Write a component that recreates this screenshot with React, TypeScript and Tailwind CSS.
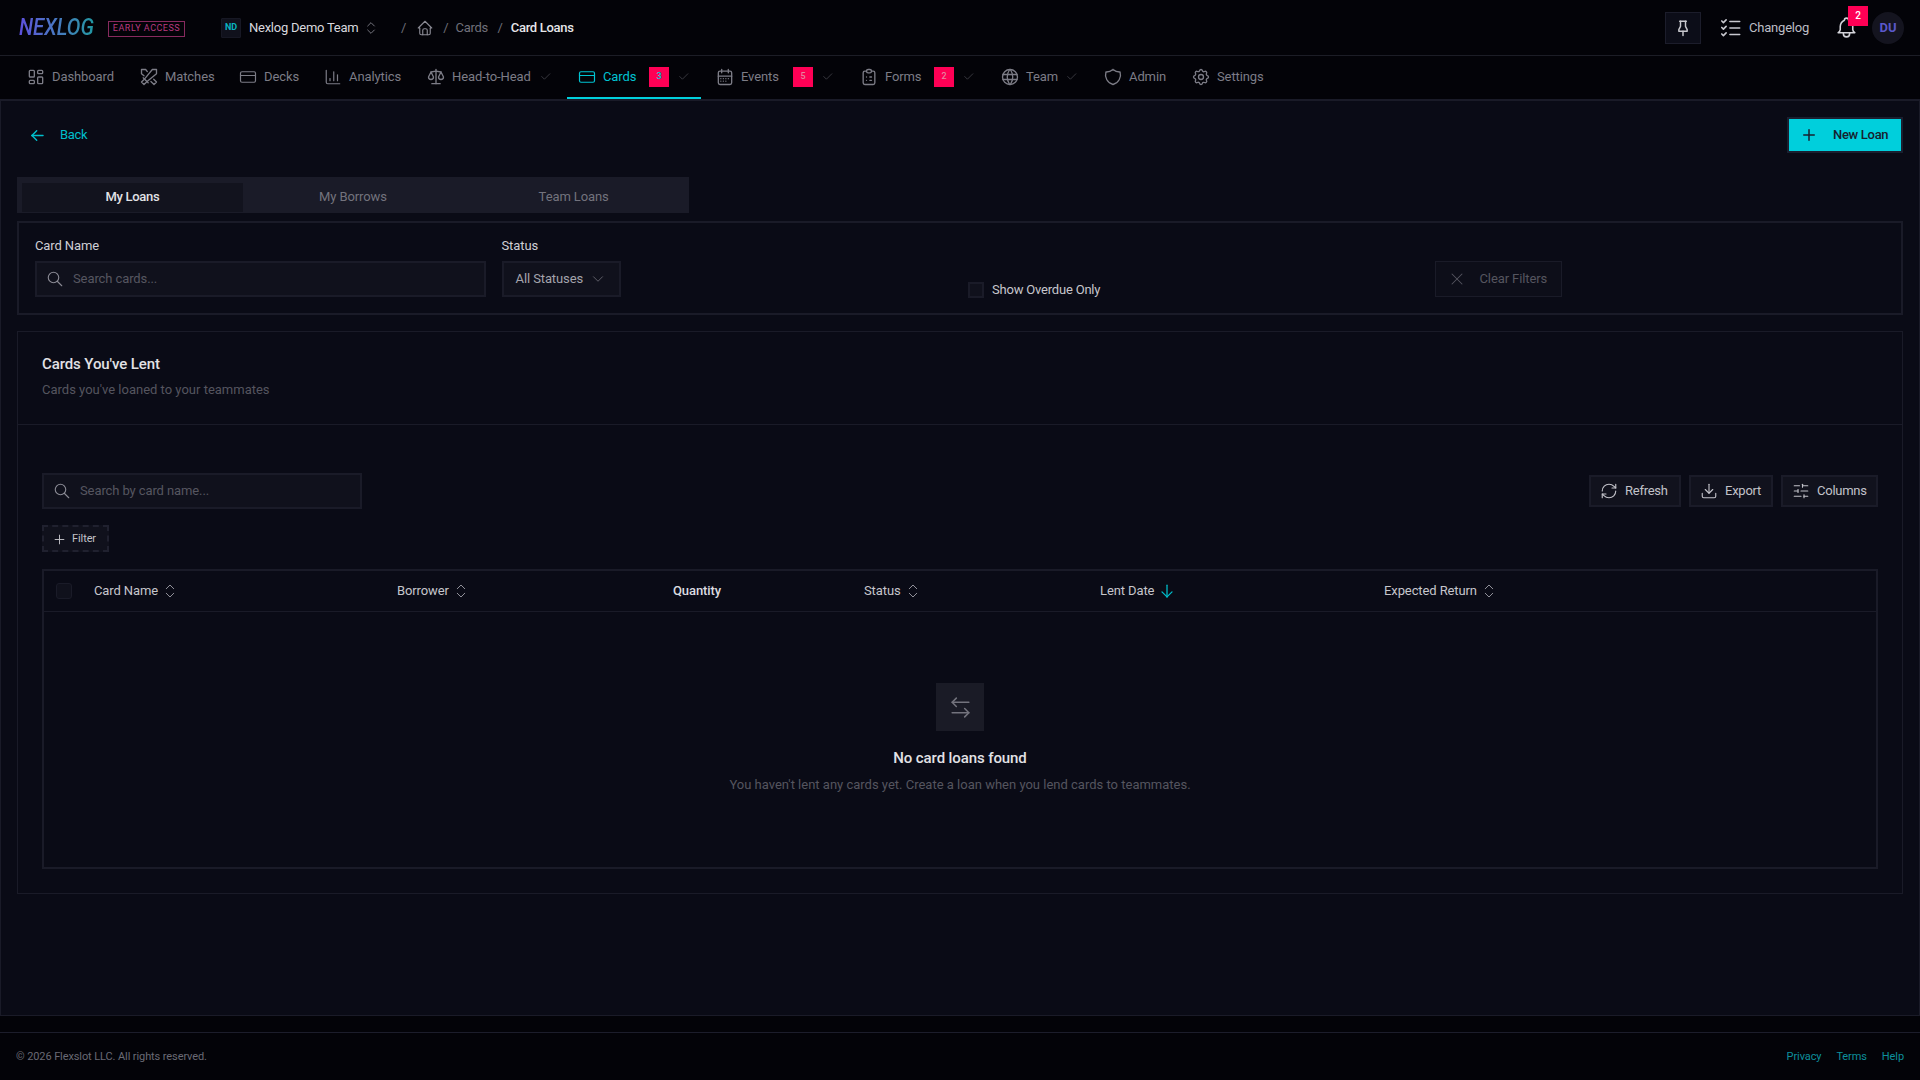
import React from "react";
import {
  TbLayoutDashboard, TbSwords, TbScale, TbCalendarMonth, TbClipboardList, TbWorld, TbShield,
  TbSettings, TbPinned, TbListCheck, TbBell, TbHome, TbSearch,
  TbCheck, TbArrowLeft, TbArrowDown, TbPlus, TbX, TbChevronDown,
} from "react-icons/tb";
import { CreditCard, ArrowLeftRight, ChartColumn, ChevronsUpDown, RefreshCw, Download, SlidersHorizontal } from "lucide-react";

const navItems = [
  { label: "Dashboard", Icon: TbLayoutDashboard, s: 20, m: "-mx-[2px]", w: "w-[109px]", t: "w-[60px]" },
  { label: "Matches", Icon: TbSwords, s: 20, m: "-mx-[2px]", w: "w-[95px]", t: "w-[47px]" },
  { label: "Decks", Icon: CreditCard, s: 18, m: "-mx-px", w: "w-[81px]", t: "w-[31px]" },
  { label: "Analytics", Icon: ChartColumn, s: 18, m: "-mx-px", w: "w-[99px]", t: "w-[51px]" },
  { label: "Head-to-Head", Icon: TbScale, s: 20, m: "-mx-[2px]", w: "w-[147px]", t: "w-[78px]", check: true },
  { label: "Cards", Icon: CreditCard, s: 18, m: "-mx-px", w: "w-[134px]", t: "w-[32px]", badge: "3", check: true, active: true },
  { label: "Events", Icon: TbCalendarMonth, s: 20, m: "-mx-[2px]", w: "w-[140px]", t: "w-[38px]", badge: "5", check: true },
  { label: "Forms", Icon: TbClipboardList, s: 20, m: "-mx-[2px]", w: "w-[137px]", t: "w-[35px]", badge: "2", check: true },
  { label: "Team", Icon: TbWorld, s: 20, m: "-mx-[2px]", w: "w-[99px]", t: "w-[30px]", check: true },
  { label: "Admin", Icon: TbShield, s: 20, m: "-mx-[2px]", w: "w-[84px]", t: "w-[36px]" },
  { label: "Settings", Icon: TbSettings, s: 20, m: "-mx-[2px]", w: "w-[95px]", t: "w-[47px]" },
];

const columns = [
  { label: "Card Name", sort: true },
  { label: "Borrower", sort: true },
  { label: "Quantity", strong: true },
  { label: "Status", sort: true },
  { label: "Lent Date", active: true },
  { label: "Expected Return", sort: true },
];

function ToolButton({ Icon, label, w }: { Icon: React.ComponentType<any>; label: string; w: string }) {
  return (
    <button className={`flex h-8 items-center gap-[7px] border-2 border-[#1a1b28] bg-[#11121d] pl-[9px] text-[13px] tracking-[-0.25px] text-[#c2c2c9] ${w}`}>
      <Icon size={18} strokeWidth={1.5} />
      {label}
    </button>
  );
}

export default function App() {
  return (
    <div className="flex h-screen w-full flex-col overflow-hidden bg-[#030308] font-[Roboto,sans-serif] text-[13px] tracking-[-0.1px] text-[#d4d4da]">
      <header className="flex h-[56px] shrink-0 items-center border-b border-[#1c1d26] pl-[19px] pr-4">
        <span className="block w-[74px]">
          <span className="inline-block w-[96px] origin-left scale-x-[0.85] whitespace-nowrap bg-gradient-to-r from-[#5d4fdc] to-[#0d9c9c] bg-clip-text pr-1 text-[24px] font-medium italic leading-none tracking-[0px] text-transparent">
            NEXLOG
          </span>
        </span>
        <span className="ml-[15px] mt-[3px] flex h-4 w-[77px] items-center justify-center border border-[#872a5e] text-[9px] tracking-[0.5px] text-[#b83a80]">
          EARLY ACCESS
        </span>
        <span className="ml-9 flex h-5 w-5 items-center justify-center rounded-[1px] border border-[#171824] bg-[#10111c] text-[9px] font-bold text-[#09b5c0]">
          ND
        </span>
        <span className="ml-2 w-[110px] whitespace-nowrap tracking-[-0.25px] text-[#d8d8de]">Nexlog Demo Team</span>
        <ChevronsUpDown size={16} strokeWidth={1.25} className="ml-1 text-[#8a8a94]" />
        <span className="ml-[22px] text-[#6e6e78]">/</span>
        <TbHome size={18} strokeWidth={1.5} className="ml-[10px] text-[#8a8a94]" />
        <span className="ml-[9px] text-[#6e6e78]">/</span>
        <span className="ml-[7px] w-[32px] whitespace-nowrap tracking-[-0.3px] text-[#70707a]">Cards</span>
        <span className="ml-[10px] text-[#6e6e78]">/</span>
        <span className="ml-[8px] whitespace-nowrap font-medium tracking-[-0.3px] text-[#e6e6ea]">Card Loans</span>

        <button className="ml-auto flex h-8 w-9 items-center justify-center border border-[#1c1d2b] bg-[#0c0d18] text-[#c8c8ce]">
          <TbPinned size={20} strokeWidth={1.75} />
        </button>
        <TbListCheck size={26} strokeWidth={1.5} className="ml-[17px] text-[#c8c8ce]" />
        <span className="ml-[5px] w-[60px] whitespace-nowrap tracking-[-0.2px] text-[#bdbdc4]">Changelog</span>
        <div className="relative ml-[29px] flex h-8 w-5 items-center justify-center text-[#d4d4da]">
          <TbBell size={25} strokeWidth={1.5} className="shrink-0 -translate-x-[2px]" />
          <span className="absolute -right-[10px] -top-[6px] flex h-5 w-5 items-center justify-center bg-[#ff0055] text-[10px] font-medium text-white">2</span>
        </div>
        <span className="ml-[14px] flex h-8 w-8 items-center justify-center rounded-full bg-[#14141f] text-[13px] font-bold text-[#5a58c9]">DU</span>
      </header>

      <nav className="flex h-[45px] shrink-0 gap-1 border-b-2 border-[#1a1b28] pl-4">
        {navItems.map(({ label, Icon, s, m, w, t, badge, check, active }) => (
          <div
            key={label}
            className={`flex h-[43px] items-center pl-3 ${w} ${active ? "border-b-2 border-[#00cfdc] text-[#00c4d2]" : "pb-[2px] text-[#7c7c86]"}`}
          >
            <Icon size={s} strokeWidth={1.6} className={`shrink-0 ${m}`} />
            <span className={`ml-2 whitespace-nowrap ${t}`}>{label}</span>
            {badge && (
              <span className={`ml-[14px] flex h-5 w-5 shrink-0 items-center justify-center bg-[#ff0055] text-[9px] font-medium ${active ? "text-[#00c4d2]" : "text-[#e6849f]"}`}>
                {badge}
              </span>
            )}
            {check && <TbCheck size={13} strokeWidth={1} className={`shrink-0 text-[#62626c] ${badge ? "ml-2" : "ml-[9px]"}`} />}
          </div>
        ))}
      </nav>

      <main className="flex flex-1 flex-col border-x border-b border-[#1a1b28] bg-[#0a0b16] px-4 pt-4">
        <div className="flex h-9 items-center justify-between">
          <button className="flex items-center pl-[11px] text-[#00bfcc]">
            <TbArrowLeft size={19} strokeWidth={1.75} />
            <span className="ml-[13px] whitespace-nowrap tracking-[-0.3px]">Back</span>
          </button>
          <button className="flex h-9 w-[116px] items-center border-2 border-[#1a2030] bg-[#00cfdc] pl-[11px] text-[13px] font-medium tracking-[-0.3px] text-[#17212e]">
            <TbPlus size={18} strokeWidth={2} />
            <span className="ml-[15px] whitespace-nowrap">New Loan</span>
          </button>
        </div>

        <div className="mt-6 grid h-9 w-[672px] grid-cols-3 bg-[#1a1b28] px-[5px] pb-px pt-[6px] text-[#73737d]">
          <button className="flex items-center justify-center bg-[#12131e] pb-px font-medium tracking-[-0.3px] text-[#e2e2e6]">My Loans</button>
          <button className="flex items-center justify-center pb-px">My Borrows</button>
          <button className="flex items-center justify-center pb-px">Team Loans</button>
        </div>

        <section className="mt-2 grid h-[94px] grid-cols-4 gap-4 border-2 border-[#1a1b28] px-4 pt-[15px]">
          <div className="flex flex-col">
            <label className="h-[14px] text-[13px] leading-[16px] text-[#cfcfd5]">Card Name</label>
            <div className="mt-[9px] flex h-9 items-center border-2 border-[#1a1b28] bg-[#10111c] pl-[9px] text-[#565660]">
              <TbSearch size={18} strokeWidth={1.5} className="text-[#8a8a94]" />
              <span className="ml-[9px]">Search cards...</span>
            </div>
          </div>
          <div className="flex flex-col">
            <label className="h-[14px] text-[13px] leading-[16px] text-[#cfcfd5]">Status</label>
            <div className="mt-[9px] flex h-9 w-[119px] items-center border-2 border-[#1a1b28] bg-[#10111c] pl-3 text-[#a4a4ac]">
              <span className="whitespace-nowrap">All Statuses</span>
              <TbChevronDown size={18} strokeWidth={1.25} className="ml-[6px] shrink-0 text-[#62626c]" />
            </div>
          </div>
          <div className="flex h-[74px] items-center pt-[30px]">
            <span className="h-4 w-4 border-2 border-[#1a1b28] bg-[#10111c]" />
            <span className="ml-2 whitespace-nowrap tracking-[-0.2px] text-[#c6c6cc]">Show Overdue Only</span>
          </div>
          <div className="flex pt-[23px]">
            <button className="flex h-9 w-[127px] items-center border border-[#1a1b28] bg-[#0d0e19] pl-[11px] text-[#55555f]">
              <TbX size={20} strokeWidth={1.25} />
              <span className="ml-[13px] whitespace-nowrap">Clear Filters</span>
            </button>
          </div>
        </section>

        <section className="mt-4 border border-[#1a1b28]">
          <div className="h-[93px] border-b border-[#1a1b28] px-6 pt-[23px]">
            <h2 className="text-[15px] font-medium leading-[18px] text-[#e2e2e6]">Cards You've Lent</h2>
            <p className="mt-2 text-[13px] leading-[18px] tracking-[0px] text-[#55555f]">Cards you've loaned to your teammates</p>
          </div>

          <div className="px-6 pb-6 pt-12">
            <div className="flex items-center justify-between">
              <div className="flex h-9 w-[320px] items-center border-2 border-[#1a1b28] bg-[#10111c] pl-[9px] text-[#565660]">
                <TbSearch size={18} strokeWidth={1.5} className="text-[#8a8a94]" />
                <span className="ml-[9px]">Search by card name...</span>
              </div>
              <div className="flex gap-2">
                <ToolButton Icon={RefreshCw} label="Refresh" w="w-[92px]" />
                <ToolButton Icon={Download} label="Export" w="w-[84px]" />
                <ToolButton Icon={SlidersHorizontal} label="Columns" w="w-[97px]" />
              </div>
            </div>

            <button className="mt-4 flex h-[27px] w-[67px] items-center border-2 border-dashed border-[#20212f] bg-[#10111c] pl-2 pt-px text-[11px] text-[#c2c2c9]">
              <TbPlus size={15} strokeWidth={1.5} />
              <span className="ml-[5px]">Filter</span>
            </button>

            <div className="mt-[17px] border-2 border-[#1a1b28]">
              <div className="grid h-[41px] grid-cols-[50px_303px_276px_191px_236px_284px_1fr] items-center border-b border-[#1a1b28] text-[#c6c6cc]">
                <span className="ml-3 h-4 w-4 rounded-[3px] border border-[#1a1b28] bg-[#10111c]" />
                {columns.map(({ label, sort, strong, active }) => (
                  <span key={label} className={`flex items-center gap-[3px] whitespace-nowrap ${strong ? "font-medium text-[#dcdce0]" : ""}`}>
                    {label}
                    {sort && <ChevronsUpDown size={18} strokeWidth={1.25} className="text-[#9a9aa2]" />}
                    {active && <TbArrowDown size={20} strokeWidth={1.5} className="text-[#00bfcc]" />}
                  </span>
                ))}
              </div>
              <div className="flex h-[255px] flex-col items-center pt-[71px]">
                <div className="flex h-12 w-12 items-center justify-center bg-[#1a1b26] text-[#73737d]">
                  <ArrowLeftRight size={25} strokeWidth={1.5} />
                </div>
                <p className="mt-[18px] text-[15px] font-medium leading-[18px] text-[#e2e2e6]">No card loans found</p>
                <p className="mt-[9px] text-[13px] leading-[18px] tracking-[0px] text-[#55555f]">You haven't lent any cards yet. Create a loan when you lend cards to teammates.</p>
              </div>
            </div>
          </div>
        </section>
      </main>

      <footer className="mt-4 flex h-12 shrink-0 items-center justify-between border-t border-[#1c1d2b] px-4 pt-px text-[11px] text-[#6a6a75]">
        <span>© 2026 Flexslot LLC. All rights reserved.</span>
        <div className="flex gap-[15px] text-[#0d8f9c]">
          <span>Privacy</span>
          <span>Terms</span>
          <span>Help</span>
        </div>
      </footer>
    </div>
  );
}
